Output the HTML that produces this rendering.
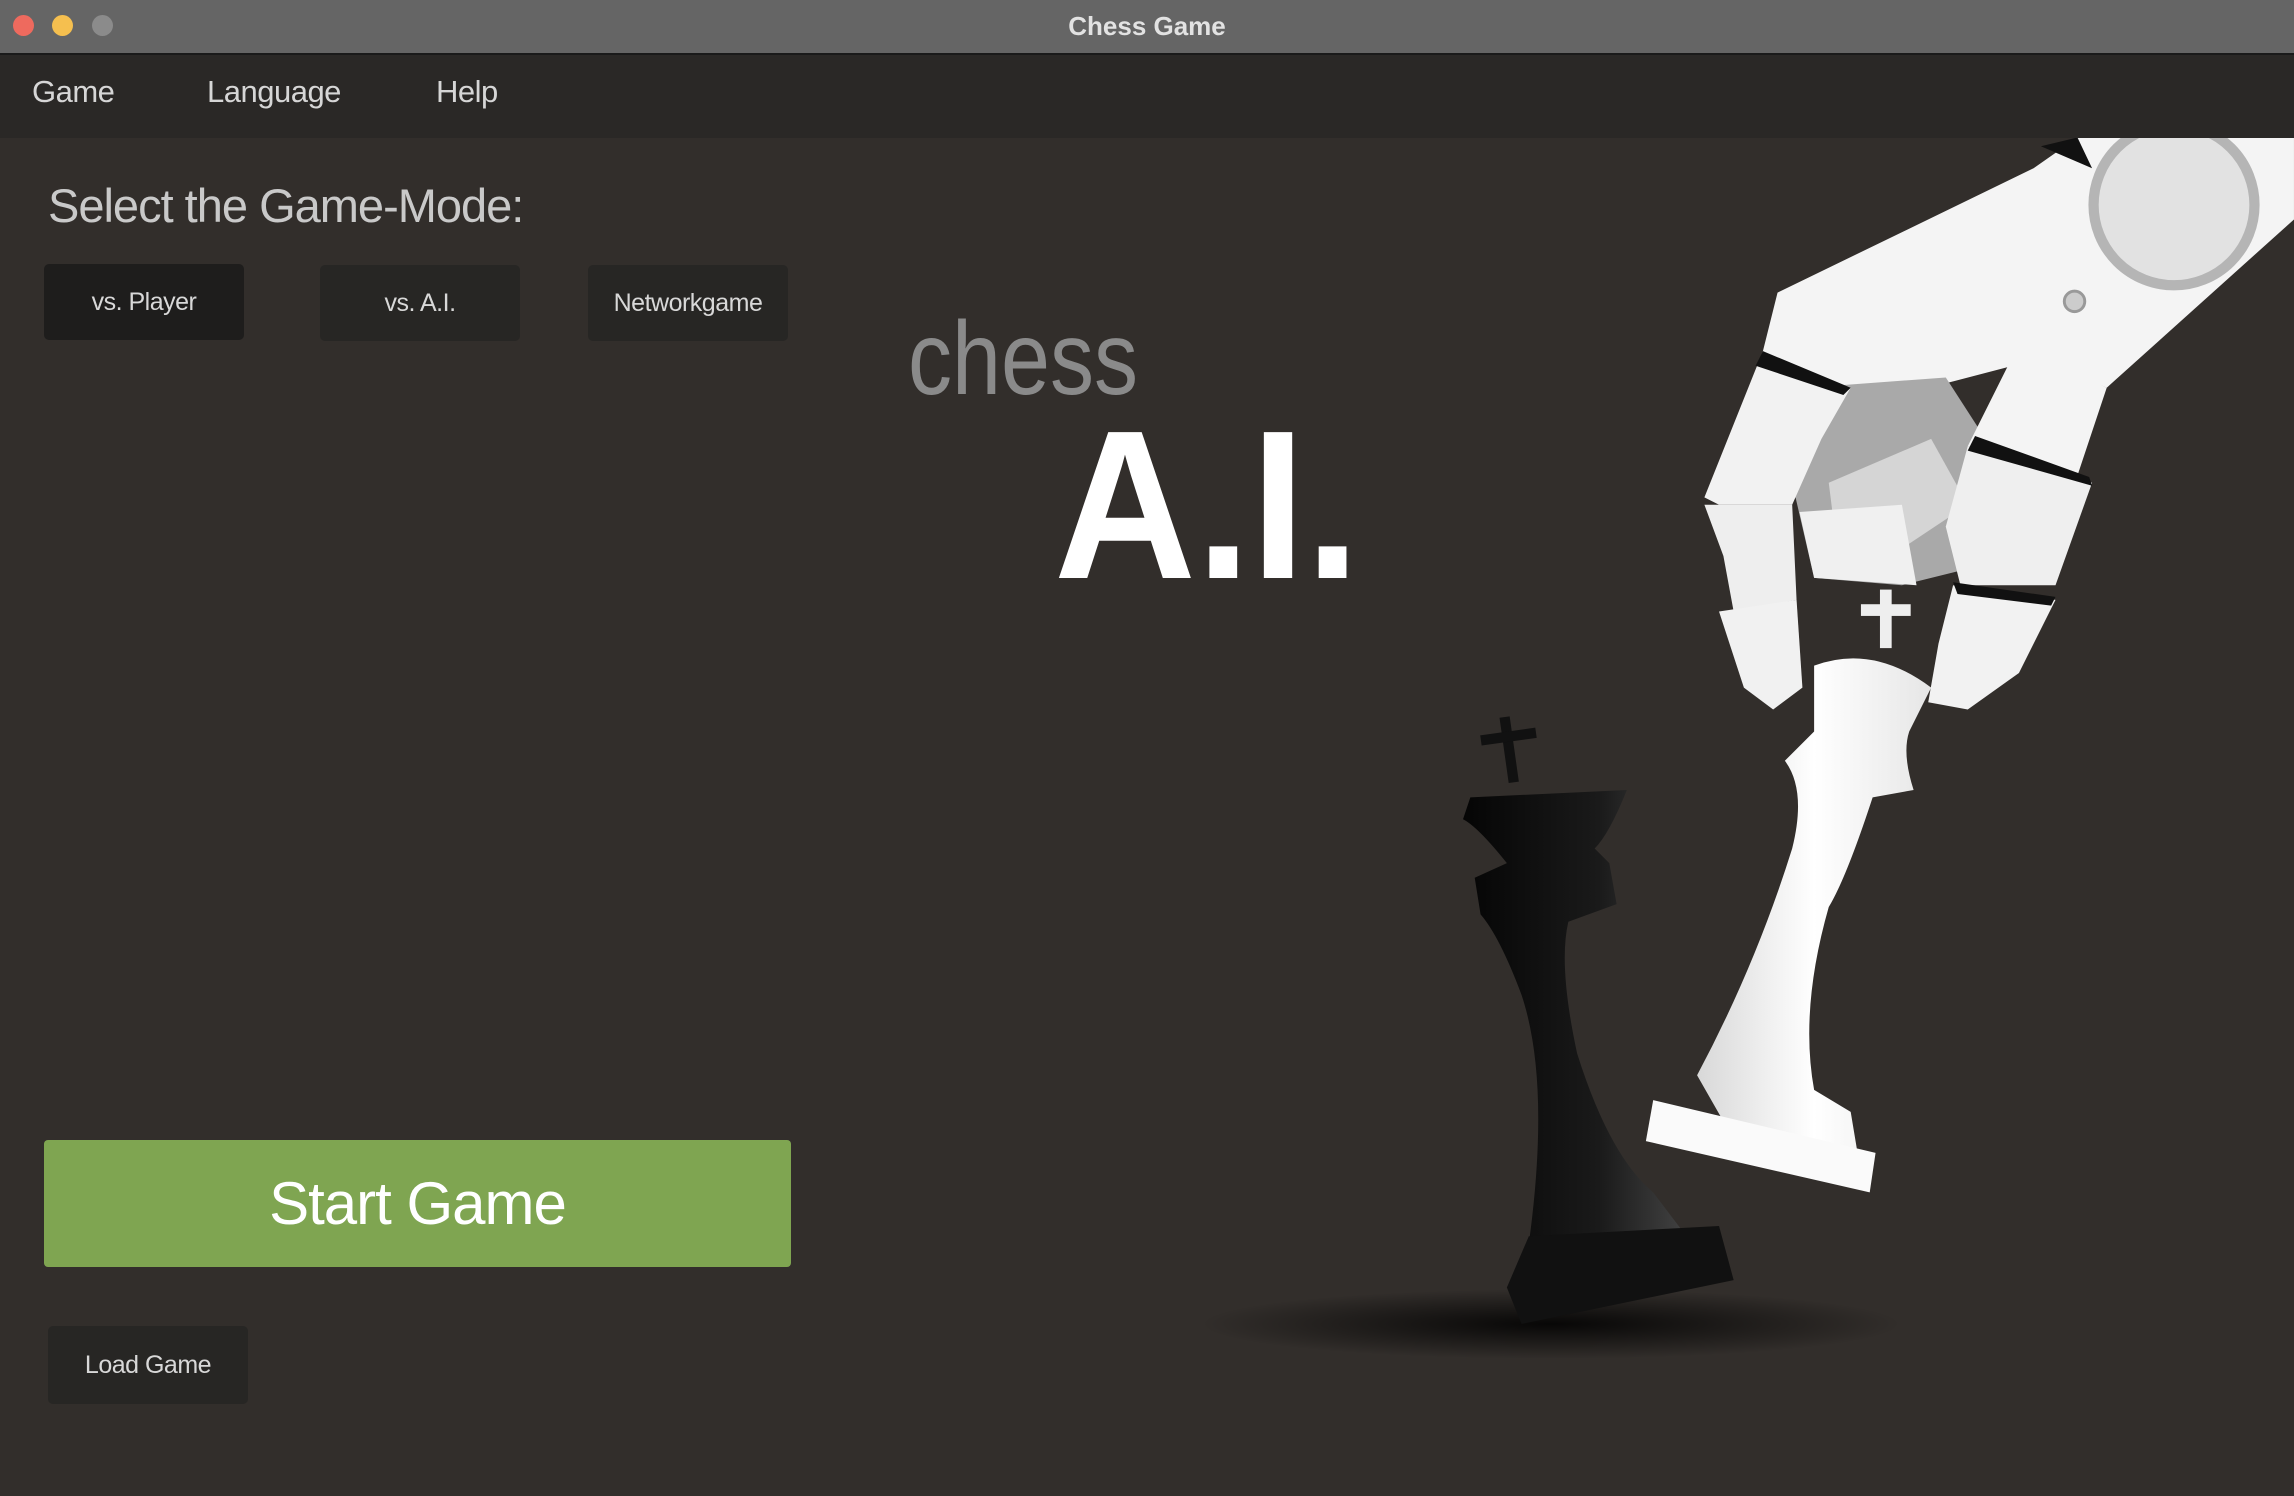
<!DOCTYPE html>
<html><head><meta charset="utf-8"><style>
html,body{margin:0;padding:0;width:2294px;height:1496px;overflow:hidden;background:#322e2b;font-family:"Liberation Sans",sans-serif}
.tb{position:absolute;left:0;top:0;width:2294px;height:53px;background:#656565;border-bottom:2px solid #1a1a1a;z-index:2}
.tb .t{position:absolute;left:0;right:0;top:11px;text-align:center;color:#e2e2e2;font-weight:bold;font-size:26px}
.dot{position:absolute;top:15px;width:21px;height:21px;border-radius:50%}
.mb{position:absolute;left:0;top:55px;width:2294px;height:83px;background:#2a2826;z-index:2}
.mb span{position:absolute;top:19px;color:#d6d6d6;font-size:31px;letter-spacing:-0.5px}
.h{position:absolute;left:48px;top:178px;color:#c9c9c9;font-size:47px;letter-spacing:-1px}
.btn{position:absolute;background:#272624;border-radius:5px;color:#d8d8d8;font-size:25px;display:flex;align-items:center;justify-content:center;letter-spacing:-0.5px}
.start{position:absolute;left:44px;top:1140px;width:747px;height:127px;background:#7fa551;border-radius:4px;color:#fff;font-size:60px;display:flex;align-items:center;justify-content:center;letter-spacing:-1px}
</style></head><body>
<div class="tb"><div class="dot" style="left:13px;background:#ee6a5e"></div><div class="dot" style="left:52px;background:#f5bf4f"></div><div class="dot" style="left:92px;background:#8b8b8b"></div><div class="t">Chess Game</div></div>
<div class="mb"><span style="left:32px">Game</span><span style="left:207px">Language</span><span style="left:436px">Help</span></div>
<div class="h">Select the Game-Mode:</div>
<div class="btn" style="left:44px;top:264px;width:200px;height:76px;background:#1e1d1c">vs. Player</div>
<div class="btn" style="left:320px;top:265px;width:200px;height:76px">vs. A.I.</div>
<div class="btn" style="left:588px;top:265px;width:200px;height:76px">Networkgame</div>
<div class="start">Start Game</div>
<div class="btn" style="left:48px;top:1326px;width:200px;height:78px">Load Game</div>
<svg style="position:absolute;left:0;top:0;z-index:1" width="2294" height="1496" viewBox="0 0 2294 1496">
<defs>
<radialGradient id="sh"><stop offset="0" stop-color="#000" stop-opacity="0.85"/><stop offset="1" stop-color="#000" stop-opacity="0"/></radialGradient>
<linearGradient id="bk" x1="0" x2="1"><stop offset="0" stop-color="#050505"/><stop offset="0.6" stop-color="#1a1a1a"/><stop offset="1" stop-color="#444"/></linearGradient>
<linearGradient id="wk" x1="0" x2="1"><stop offset="0" stop-color="#d8d8d8"/><stop offset="0.5" stop-color="#fff"/><stop offset="1" stop-color="#e6e6e6"/></linearGradient>
</defs>
<text x="908" y="394" font-size="104" fill="#8a8a8a" font-family="Liberation Sans" textLength="230" lengthAdjust="spacingAndGlyphs">chess</text>
<text x="1054" y="578" font-size="212" fill="#fff" font-weight="bold" font-family="Liberation Sans" textLength="306" lengthAdjust="spacingAndGlyphs">A.I.</text>
<g transform="scale(1.463)">
<ellipse cx="1060" cy="905" rx="240" ry="24" fill="url(#sh)"/>
<polygon points="1420,94 1568,94 1568,150 1440,265 1395,245 1330,262 1300,290 1205,240 1215,200 1390,115" fill="#f4f4f4"/>
<polygon points="1395,100 1420,94 1430,115" fill="#111"/>
<circle cx="1486" cy="140" r="55" fill="#e2e2e2" stroke="#b5b5b5" stroke-width="7"/>
<circle cx="1418" cy="206" r="7" fill="#ccc" stroke="#999" stroke-width="2"/>
<polygon points="1235,265 1330,258 1370,320 1340,390 1300,400 1240,395 1225,330" fill="#a9a9a9"/>
<polygon points="1250,330 1320,300 1345,345 1300,375 1255,370" fill="#d5d5d5"/>
<polygon points="1205,240 1265,265 1245,300 1225,345 1175,345 1165,340 1185,290" fill="#f2f2f2"/>
<polygon points="1205,240 1265,265 1260,270 1200,250" fill="#111"/>
<polygon points="1165,345 1225,345 1228,410 1185,418 1178,380" fill="#eee"/>
<polygon points="1175,418 1228,410 1232,470 1212,485 1192,470" fill="#f1f1f1"/>
<polygon points="1230,350 1300,345 1310,400 1240,395" fill="#f0f0f0"/>
<polygon points="1380,235 1440,265 1420,325 1380,310 1345,305" fill="#f4f4f4"/>
<polygon points="1345,305 1430,330 1405,400 1340,400 1330,360" fill="#efefef"/>
<polygon points="1345,308 1430,332 1428,326 1350,298" fill="#111"/>
<polygon points="1335,400 1405,410 1380,460 1345,485 1318,480 1325,440" fill="#f2f2f2"/>
<polygon points="1335,398 1405,408 1402,414 1338,406" fill="#111"/>
<rect x="1285" y="403" width="8" height="40" fill="#eee"/>
<rect x="1272" y="413" width="34" height="8" fill="#eee"/>
<path d="M1240,455 Q1280,440 1320,470 L1305,500 Q1300,515 1308,540 L1280,545 Q1262,600 1250,620 Q1230,690 1240,745 L1265,760 L1270,790 L1180,770 L1160,735 Q1200,660 1225,580 Q1235,540 1220,520 L1240,500 Z" fill="url(#wk)"/>
<polygon points="1130,752 1282,788 1278,815 1125,780" fill="#fafafa"/>
<rect x="1028" y="490" width="7" height="45" fill="#111" transform="rotate(-8 1031 512)"/>
<rect x="1012" y="500" width="38" height="7" fill="#111" transform="rotate(-8 1031 503)"/>
<path d="M1005,545 L1112,540 Q1100,570 1090,580 L1100,590 L1105,618 L1072,630 Q1065,660 1078,720 Q1100,790 1130,815 L1155,848 L1045,850 Q1060,740 1040,680 Q1025,640 1012,625 L1008,600 L1030,590 Q1010,565 1000,560 Z" fill="url(#bk)"/>
<polygon points="1045,845 1175,838 1185,875 1040,905 1030,880" fill="#111"/>
</g>
</svg>
</body></html>
